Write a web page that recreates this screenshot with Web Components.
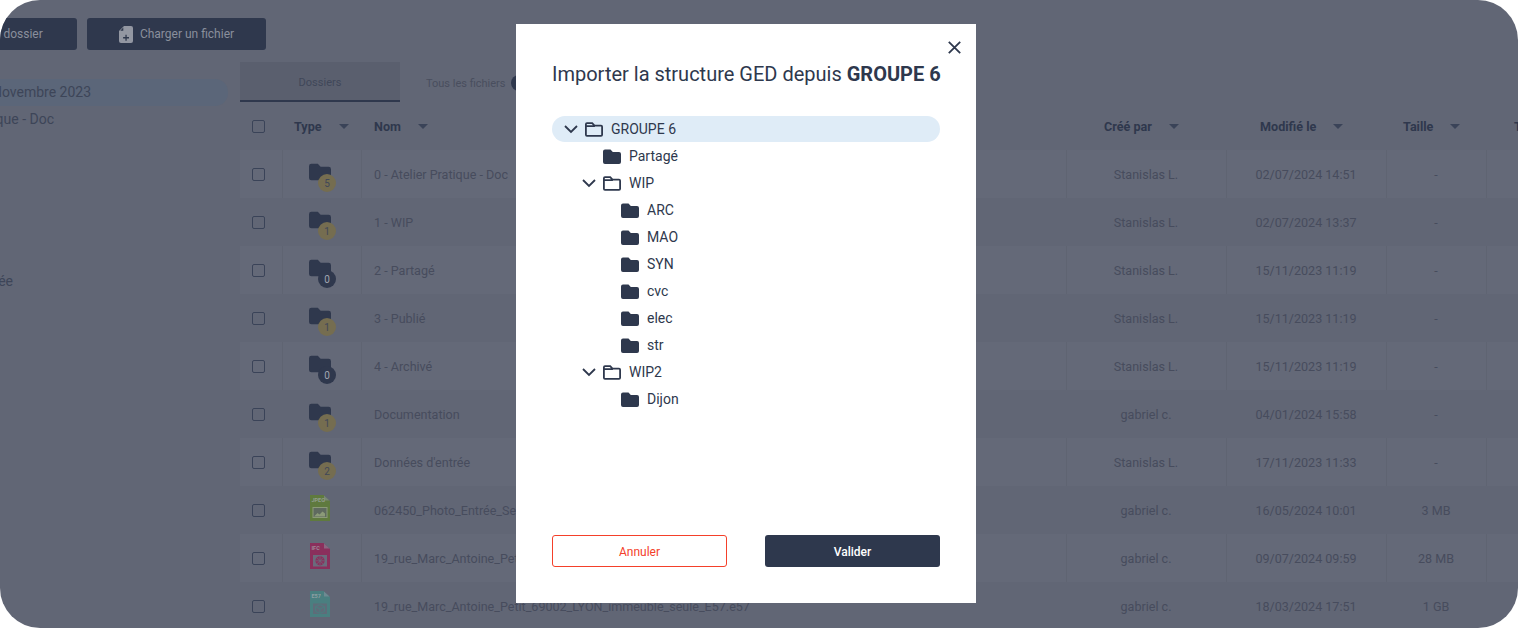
<!DOCTYPE html>
<html lang="fr">
<head>
<meta charset="utf-8">
<title>Importer la structure GED</title>
<style>
html,body{margin:0;height:100%;background:#fff;overflow:hidden}
body{font-family:Roboto,"Liberation Sans",sans-serif}
</style>
</head>
<body>
<x-app>
  <x-toolbar slot="toolbar">
    <x-action style="margin-left:-102px" icon="folder">Nouveau dossier</x-action>
    <x-action icon="file">Charger un fichier</x-action>
  </x-toolbar>
  <x-sidebar slot="sidebar">
    <x-side-item selected end="91">Novembre 2023</x-side-item>
    <x-side-item end="54">0 - Atelier Pratique - Doc</x-side-item>
    <x-side-item end="13" style="margin-top:135px">Données d'entrée</x-side-item>
  </x-sidebar>
  <x-tabs slot="tabs"></x-tabs>
  <x-table slot="table">
    <x-row kind="folder" badge="5" name="0 - Atelier Pratique - Doc" by="Stanislas L." date="02/07/2024 14:51" size="-"></x-row>
    <x-row kind="folder" badge="1" name="1 - WIP" by="Stanislas L." date="02/07/2024 13:37" size="-"></x-row>
    <x-row kind="folder" badge="0" name="2 - Partagé" by="Stanislas L." date="15/11/2023 11:19" size="-"></x-row>
    <x-row kind="folder" badge="1" name="3 - Publié" by="Stanislas L." date="15/11/2023 11:19" size="-"></x-row>
    <x-row kind="folder" badge="0" name="4 - Archivé" by="Stanislas L." date="15/11/2023 11:19" size="-"></x-row>
    <x-row kind="folder" badge="1" name="Documentation" by="gabriel c." date="04/01/2024 15:58" size="-"></x-row>
    <x-row kind="folder" badge="2" name="Données d'entrée" by="Stanislas L." date="17/11/2023 11:33" size="-"></x-row>
    <x-row kind="jpeg" name="062450_Photo_Entrée_Seule.jpeg" by="gabriel c." date="16/05/2024 10:01" size="3 MB"></x-row>
    <x-row kind="ifc" name="19_rue_Marc_Antoine_Petit_69002_LYON.ifc" by="gabriel c." date="09/07/2024 09:59" size="28 MB"></x-row>
    <x-row kind="e57" name="19_rue_Marc_Antoine_Petit_69002_LYON_immeuble_seule_E57.e57" by="gabriel c." date="18/03/2024 17:51" size="1 GB"></x-row>
  </x-table>
  <x-modal slot="modal">
    <span slot="title">Importer la structure GED depuis <b>GROUPE 6</b></span>
    <x-node level="0" open selected>GROUPE 6</x-node>
    <x-node level="1" leaf>Partagé</x-node>
    <x-node level="1" open>WIP</x-node>
    <x-node level="2" leaf>ARC</x-node>
    <x-node level="2" leaf>MAO</x-node>
    <x-node level="2" leaf>SYN</x-node>
    <x-node level="2" leaf>cvc</x-node>
    <x-node level="2" leaf>elec</x-node>
    <x-node level="2" leaf>str</x-node>
    <x-node level="1" open>WIP2</x-node>
    <x-node level="2" leaf>Dijon</x-node>
    <x-btn slot="footer" variant="ghost">Annuler</x-btn>
    <x-btn slot="footer" variant="solid">Valider</x-btn>
  </x-modal>
</x-app>
<script>
const INK='#2e384d';
const FOLDER_PATH='M2 1.500h5.200l2.300 2.400H16a2 2 0 0 1 2 2V13a2 2 0 0 1-2 2H2a2 2 0 0 1-2-2V3.500a2 2 0 0 1 2-2z';
function def(name,css,html){
  customElements.define(name,class extends HTMLElement{
    connectedCallback(){
      if(this.shadowRoot)return;
      const r=this.attachShadow({mode:'open'});
      r.innerHTML='<style>'+css+'</style>'+(typeof html==='function'?html(this):html);
    }
  });
}
def('x-app',`
  :host{display:block;position:relative;width:1518px;height:628px;background:#616675;border-radius:40px;overflow:hidden;color:#464b5c;font:12px Roboto,"Liberation Sans",sans-serif}
  .top{padding-top:18px;height:32px}
  .main{display:grid;grid-template-columns:240px 1fr;margin-top:12px}
`,`<div class="top"><slot name="toolbar"></slot></div>
   <div class="main"><slot name="sidebar"></slot><div><slot name="tabs"></slot><slot name="table"></slot></div></div>
   <slot name="modal"></slot>`);
def('x-toolbar',`:host{display:flex;gap:10px}`,`<slot></slot>`);
def('x-action',`
  :host{display:flex;align-items:center;justify-content:center;gap:7px;width:179px;height:32px;flex:none;background:#2f384d;border-radius:3px;color:#8a8f9c;font-size:12px;white-space:nowrap}
  svg{display:block}
`,h=>`<svg width="14" height="17" viewBox="0 0 14 17"><path fill="#9397a2" d="M5 0h7a2 2 0 0 1 2 2v13a2 2 0 0 1-2 2H2a2 2 0 0 1-2-2V5z"/><path fill="#2f384d" d="M4.300 1.500 1.300 4.800h3zM6.400 8.800h1.300v2.300H10v1.300H7.700v2.300H6.400v-2.300H4.100v-1.300h2.300z"/></svg><slot></slot>`);
def('x-sidebar',`:host{display:block;padding-top:17px}`,`<slot></slot>`);
def('x-side-item',`
  :host{display:flex;align-items:center;justify-content:flex-end;box-sizing:border-box;width:228px;height:27px;padding-bottom:2px;font-size:14px;color:#3d4558;white-space:nowrap}
  :host([selected]){background:#5b6679;border-radius:0 13px 13px 0}
`,h=>`<style>:host{padding-right:${228-(+h.getAttribute('end'))}px}</style><slot></slot>`);
def('x-tabs',`
  :host{display:flex;height:40px;font-size:11px;color:#404759}
  .a{width:160px;box-sizing:border-box;background:#5a5f6e;border-bottom:2px solid #2f384d;padding-top:2px;display:flex;align-items:center;justify-content:center}
  .b{display:flex;align-items:center;gap:5px;margin-left:26px;height:40px;padding-top:2px;box-sizing:border-box;color:#494e5e}
  .c{width:16px;height:16px;border-radius:50%;background:#2f384d}
`,`<div class="a">Dossiers</div><div class="b">Tous les fichiers<span class="c"></span></div>`);
const COLS='grid-template-columns:42px 79px 705px 160px 160px 100px 32px';
def('x-table',`
  :host{display:block}
  .head{display:grid;${COLS};height:48px;align-items:center;font-weight:700;font-size:12.6px;color:#2f384d}
  .head>div{display:flex;align-items:center;white-space:nowrap}
  .head span:not(.cb){padding-top:1px}
  .cb{width:13px;height:13px;box-sizing:border-box;border:1.5px solid #3a4358;border-radius:2px;margin-left:12px}
  i{display:block;width:0;height:0;border:5px solid transparent;border-top-color:#3a4358;border-bottom:0;margin-left:17px}
`,`<div class="head">
    <div><span class="cb"></span></div>
    <div style="padding-left:12px"><span>Type</span><i></i></div>
    <div style="padding-left:13px"><span>Nom</span><i></i></div>
    <div style="padding-left:38px"><span>Créé par</span><i></i></div>
    <div style="padding-left:34px"><span>Modifié le</span><i></i></div>
    <div style="padding-left:17px"><span>Taille</span><i></i></div>
    <div style="padding-left:28px"><span>T</span></div>
  </div><slot></slot>`);
const FILES={
 jpeg:{c:'#5f7a3e',l:'JPEG',art:'<rect x="3" y="12.500" width="14" height="10" fill="#5f6a5f" stroke="#8b9a78" stroke-width="1"/><path d="M4 21.500l3.500-3.500 2 1.500 3-3 2.500 2v3z" fill="#8b9a78"/>'},
 ifc:{c:'#8a2f5c',l:'IFC',art:'<rect x="3" y="12" width="14" height="11.500" fill="#6a6b7c"/><circle cx="10" cy="17.800" r="4.600" fill="#8a2f5c"/><path d="M5.400 17.800h9.200M10 13.200v9.200M6.800 14.600l6.400 6.400M13.200 14.600l-6.400 6.400" stroke="#6a6b7c" stroke-width=".7"/>'},
 e57:{c:'#4a7f80',l:'E57',art:'<rect x="3" y="12.500" width="14" height="10.500" fill="#5e6c79"/><path d="M10 13.500l4.500 2.200v4.600L10 22.500l-4.500-2.200v-4.600zM5.500 15.700l4.500 2.200 4.500-2.200M10 17.900v4.600" fill="none" stroke="#4a7f80" stroke-width=".9"/>'}
};
def('x-row',`
  :host{display:grid;${COLS};height:48px;align-items:stretch;color:#474c5d}
  :host(:nth-child(odd)){background:#646978}
  .cell{display:flex;align-items:center;justify-content:center;white-space:nowrap;font-size:12.550px}
  :host(:nth-child(odd)) .cell{box-shadow:inset 1px 0 #5f6472}
  :host(:nth-child(odd)) .cell.first{box-shadow:none}
  .cell.first{justify-content:flex-start}
  .name{justify-content:flex-start;padding-left:13px;overflow:hidden}
  .cb{width:13px;height:13px;box-sizing:border-box;border:1.5px solid #3a4358;border-radius:2px;margin-left:12px}
  .ic{position:relative;width:27px;height:28px;margin-left:2px}
  .ic svg{display:block;position:absolute}
  .badge{position:absolute;left:9px;top:14px;width:18px;height:18px;border-radius:50%;display:flex;align-items:center;justify-content:center;font-size:10px;background:#756d50;color:#3f4759}
  .badge.z{background:#2f384d;color:#a2a6b0}
`,h=>{
  const k=h.getAttribute('kind'),b=h.getAttribute('badge');
  let ic;
  if(k==='folder'){
    ic=`<svg style="left:0;top:2px" width="22" height="19" viewBox="0 0 18 15.500"><path fill="#2f384d" d="${FOLDER_PATH}"/></svg><span class="badge${b==='0'?' z':''}">${b}</span>`;
  }else{
    const f=FILES[k];
    ic=`<svg style="left:1px;top:-1px" width="20" height="26" viewBox="0 0 20 26"><path fill="${f.c}" d="M0 0h13.500l6.500 6v20H0z"/><path fill="#8d93a0" opacity=".55" d="M14 .5l5.500 5H14z"/>${f.art}<text x="1.500" y="7" font-size="5.500" font-weight="700" font-family="Roboto,sans-serif" fill="#a9adb3" opacity=".7">${f.l}</text></svg>`;
  }
  return `<div class="cell first"><span class="cb"></span></div>
    <div class="cell"><div class="ic">${ic}</div></div>
    <div class="cell name">${h.getAttribute('name')}</div>
    <div class="cell">${h.getAttribute('by')}</div>
    <div class="cell">${h.getAttribute('date')}</div>
    <div class="cell">${h.getAttribute('size')}</div>
    <div class="cell"></div>`;
});
def('x-modal',`
  :host{position:absolute;left:516px;top:24px;width:460px;height:579px;box-sizing:border-box;padding:37px 36px 36px;background:#fff;color:${INK};display:flex;flex-direction:column}
  h2{margin:0;font-size:20px;font-weight:400;line-height:26px;white-space:nowrap}
  .tree{margin-top:29px;flex:1;display:block}
  .foot{display:flex;justify-content:space-between}
  .x{position:absolute;left:432px;top:17px;display:block}
`,`<svg class="x" width="13" height="13" viewBox="0 0 13 13"><path d="M.8.800l11.400 11.400M12.200.800.800 12.200" stroke="${INK}" stroke-width="1.800" fill="none"/></svg>
  <h2><slot name="title"></slot></h2>
  <div class="tree"><slot></slot></div>
  <div class="foot"><slot name="footer"></slot></div>`);
def('x-node',`
  :host{display:flex;align-items:center;height:26px;margin-bottom:1px;font-size:14px;color:${INK};white-space:nowrap}
  :host([selected]){background:#dfecf7;border-radius:13px}
  .ch{width:18px;height:18px;flex:none;margin-right:5px;display:block}
  .ph{width:18px;flex:none;margin-right:5px}
  .f{width:18px;height:15px;flex:none;margin-right:8px;display:block}
`,h=>{
  const l=+h.getAttribute('level');
  const ch=h.hasAttribute('leaf')?'<span class="ph"></span>':`<svg class="ch" viewBox="0 0 18 18"><path d="M3 6l6 6 6-6" fill="none" stroke="${INK}" stroke-width="1.800"/></svg>`;
  const f=h.hasAttribute('leaf')
    ?`<svg class="f" viewBox="0 0 18 15"><path fill="${INK}" d="M2 .500h5.500L9.800 3H16a2 2 0 0 1 2 2v8a2 2 0 0 1-2 2H2a2 2 0 0 1-2-2V2.500a2 2 0 0 1 2-2z"/></svg>`
    :`<svg class="f" viewBox="0 0 18 15"><path fill="none" stroke="${INK}" stroke-width="1.800" d="M2 1.200h5.200L9.500 3.700H16c.7 0 1.100.4 1.100 1.100v8c0 .7-.4 1.100-1.100 1.100H2c-.7 0-1.100-.4-1.100-1.100V2.300c0-.7.4-1.100 1.100-1.100zM.9 4.200h9"/></svg>`;
  return `<style>:host{padding-left:${10+18*l}px}</style>${ch}${f}<slot></slot>`;
});
def('x-btn',`
  :host{display:flex;align-items:center;justify-content:center;box-sizing:border-box;width:175px;height:32px;padding-top:2px;border-radius:3px;font-size:12px}
  :host([variant=ghost]){border:1px solid #f4402a;color:#f4402a;background:#fff}
  :host([variant=solid]){background:#2e384d;color:#fff;font-weight:500}
`,`<slot></slot>`);
</script>
</body>
</html>
